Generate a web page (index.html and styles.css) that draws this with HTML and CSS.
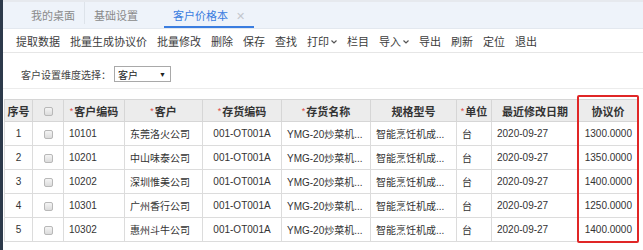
FILE: index.html
```html
<!DOCTYPE html>
<html lang="zh-CN">

<head>
    <meta charset="UTF-8">
    <meta name="viewport" content="width=device-width, initial-scale=1.0">
    <title>客户价格本</title>
    <link rel="stylesheet" href="styles.css">
</head>

<body>
    <div class="side-strip"></div>

    <div class="main">
        <div class="tab-bar">
            <div class="tab tab-first">我的桌面</div>
            <div class="tab">基础设置</div>
            <div class="tab tab-active">客户价格本 <span class="tab-close">✕</span></div>
        </div>

        <div class="toolbar">
            <span class="tool">提取数据</span>
            <span class="tool">批量生成协议价</span>
            <span class="tool">批量修改</span>
            <span class="tool">删除</span>
            <span class="tool">保存</span>
            <span class="tool">查找</span>
            <span class="tool">打印<svg class="chev" width="6" height="4" viewBox="0 0 6 4"><polyline points="0.5,0.5 3,3 5.5,0.5" /></svg></span>
            <span class="tool">栏目</span>
            <span class="tool">导入<svg class="chev" width="6" height="4" viewBox="0 0 6 4"><polyline points="0.5,0.5 3,3 5.5,0.5" /></svg></span>
            <span class="tool">导出</span>
            <span class="tool">刷新</span>
            <span class="tool">定位</span>
            <span class="tool">退出</span>
        </div>

        <div class="filter-row">
            <span class="filter-label">客户设置维度选择：</span>
            <div class="select-box">
                <span>客户</span>
                <span class="select-arrow">▼</span>
            </div>
        </div>

        <div class="table-wrap">
            <table class="grid">
                <colgroup>
                    <col style="width:28px">
                    <col style="width:31px">
                    <col style="width:61px">
                    <col style="width:78px">
                    <col style="width:79px">
                    <col style="width:89px">
                    <col style="width:86px">
                    <col style="width:35px">
                    <col style="width:87px">
                    <col style="width:59px">
                </colgroup>
                <thead>
                    <tr>
                        <th>序号</th>
                        <th><span class="check"></span></th>
                        <th><i class="req">*</i>客户编码</th>
                        <th><i class="req">*</i>客户</th>
                        <th><i class="req">*</i>存货编码</th>
                        <th><i class="req">*</i>存货名称</th>
                        <th>规格型号</th>
                        <th><i class="req">*</i>单位</th>
                        <th>最近修改日期</th>
                        <th>协议价</th>
                    </tr>
                </thead>
                <tbody>
                    <tr>
                        <td class="c">1</td>
                        <td class="c"><span class="check"></span></td>
                        <td>10101</td>
                        <td>东莞洛火公司</td>
                        <td class="c">001-OT001A</td>
                        <td>YMG-20炒菜机...</td>
                        <td>智能烹饪机成...</td>
                        <td>台</td>
                        <td>2020-09-27</td>
                        <td class="r">1300.0000</td>
                    </tr>
                    <tr>
                        <td class="c">2</td>
                        <td class="c"><span class="check"></span></td>
                        <td>10201</td>
                        <td>中山味泰公司</td>
                        <td class="c">001-OT001A</td>
                        <td>YMG-20炒菜机...</td>
                        <td>智能烹饪机成...</td>
                        <td>台</td>
                        <td>2020-09-27</td>
                        <td class="r">1350.0000</td>
                    </tr>
                    <tr>
                        <td class="c">3</td>
                        <td class="c"><span class="check"></span></td>
                        <td>10202</td>
                        <td>深圳惟美公司</td>
                        <td class="c">001-OT001A</td>
                        <td>YMG-20炒菜机...</td>
                        <td>智能烹饪机成...</td>
                        <td>台</td>
                        <td>2020-09-27</td>
                        <td class="r">1400.0000</td>
                    </tr>
                    <tr>
                        <td class="c">4</td>
                        <td class="c"><span class="check"></span></td>
                        <td>10301</td>
                        <td>广州香行公司</td>
                        <td class="c">001-OT001A</td>
                        <td>YMG-20炒菜机...</td>
                        <td>智能烹饪机成...</td>
                        <td>台</td>
                        <td>2020-09-27</td>
                        <td class="r">1250.0000</td>
                    </tr>
                    <tr>
                        <td class="c">5</td>
                        <td class="c"><span class="check"></span></td>
                        <td>10302</td>
                        <td>惠州斗牛公司</td>
                        <td class="c">001-OT001A</td>
                        <td>YMG-20炒菜机...</td>
                        <td>智能烹饪机成...</td>
                        <td>台</td>
                        <td>2020-09-27</td>
                        <td class="r">1400.0000</td>
                    </tr>
                </tbody>
            </table>
            <!-- highlight around the price column -->
            <div class="price-mark"></div>
        </div>
    </div>
</body>

</html>
```

FILE: styles.css
```css
* {
    margin: 0;
    padding: 0;
    box-sizing: border-box;
}

body {
    display: flex;
    width: 643px;
    height: 250px;
    overflow: hidden;
    background: #fff;
    font-family: "Liberation Sans", "Noto Sans CJK SC", sans-serif;
    color: #333;
}

.side-strip {
    width: 3px;
    flex-shrink: 0;
    background: #2d3a4b;
}

.main {
    flex: 1;
    display: flex;
    flex-direction: column;
}

/* tabs */
.tab-bar {
    display: flex;
    height: 29px;
    padding-left: 19px;
    background: #eef3fa;
    border-top: 2px solid #e6e9ee;
    border-bottom: 1px solid #e3e8ef;
}

.tab {
    padding: 2px 9px 0;
    line-height: 24px;
    font-size: 11px;
    color: #8a8a8a;
}

.tab-first {
    border-right: 1px solid #dde3ea;
    margin: 0 0 4px;
}

.tab-active {
    margin-left: 17px;
    color: #3a7de0;
    border-bottom: 2px solid #3a7de0;
}

.tab-close {
    margin-left: 5px;
    font-size: 11px;
    color: #c3c7ce;
}

/* toolbar */
.toolbar {
    display: flex;
    gap: 10px;
    height: 24px;
    padding: 3px 0 0 13px;
    line-height: 20px;
    font-size: 11px;
    color: #3c3c3c;
    border-bottom: 1px solid #e6e6e6;
}

.tool {
    display: flex;
    align-items: center;
}

.chev {
    margin-left: 2px;
    fill: none;
    stroke: #555;
    stroke-width: 1.2;
}

/* filter */
.filter-row {
    display: flex;
    align-items: center;
    height: 36px;
    padding: 7px 0 0 18px;
    border-bottom: 1px solid #ececec;
    font-size: 10px;
    color: #444;
}

.select-box {
    display: flex;
    justify-content: space-between;
    align-items: center;
    width: 57px;
    height: 16px;
    margin-left: 3px;
    padding: 0 4px 0 3px;
    border: 1px solid #a9a9a9;
    font-size: 10px;
    color: #222;
}

.select-arrow {
    font-size: 7px;
}

/* grid */
.table-wrap {
    position: relative;
    width: 634px;
    margin: 10px 0 0 1px;
}

.grid {
    width: 633px;
    table-layout: fixed;
    border-collapse: collapse;
    font-size: 10px;
}

.grid th {
    height: 22px;
    background: #ececec;
    border: 1px solid #d6d6d6;
    font-size: 11px;
    font-weight: bold;
    color: #333;
    text-align: center;
}

.grid td {
    height: 24px;
    padding: 0 5px;
    border: 1px solid #dcdcdc;
    color: #333;
    white-space: nowrap;
    overflow: hidden;
}

.grid td.c {
    text-align: center;
}

.grid td.r {
    text-align: right;
}

.req {
    font-style: normal;
    font-weight: normal;
    font-size: 9px;
    color: #e0463c;
    margin-right: 1px;
    vertical-align: 2px;
}

.check {
    display: inline-block;
    width: 9px;
    height: 9px;
    border: 1px solid #b8b8b8;
    border-radius: 2px;
    background: linear-gradient(#f4f4f4, #dcdcdc);
    vertical-align: middle;
}

.price-mark {
    position: absolute;
    left: 573px;
    top: -4px;
    width: 62px;
    bottom: -1px;
    border: 2px solid #e02626;
    border-radius: 2px;
}
```
